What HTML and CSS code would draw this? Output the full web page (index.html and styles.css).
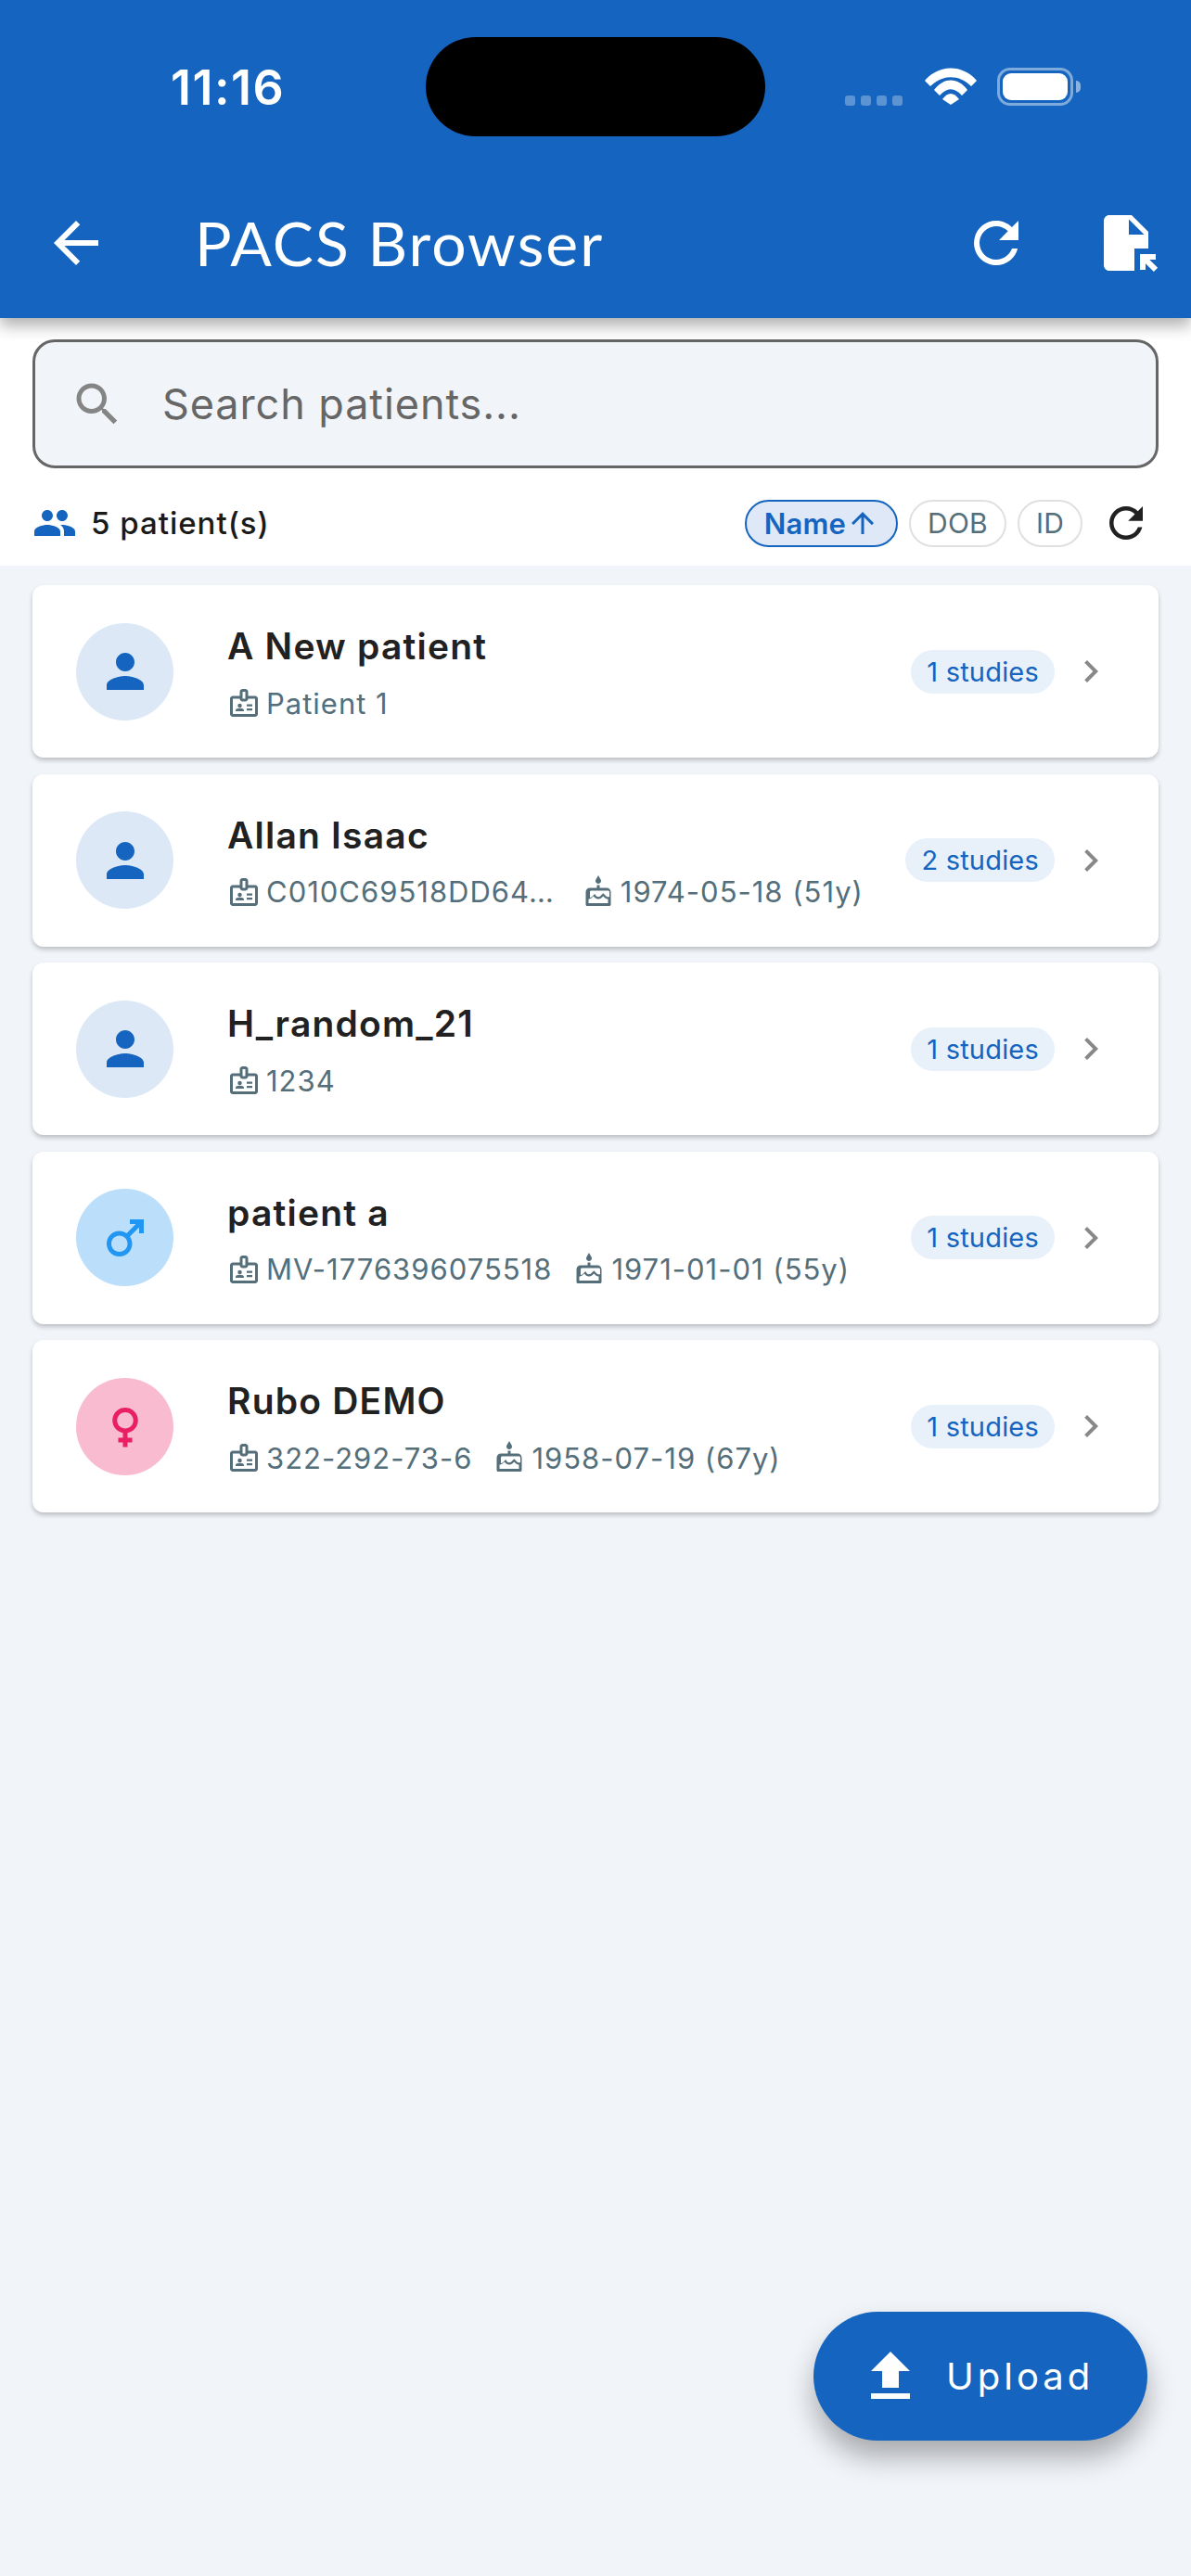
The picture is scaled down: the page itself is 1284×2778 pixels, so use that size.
FILE: index.html
```html
<!DOCTYPE html>
<html lang="en">
<head>
    <meta charset="UTF-8">
    <meta name="viewport" content="width=device-width, initial-scale=1.0">
    <title>PACS Browser</title>
    <link rel="stylesheet" href="styles.css">
</head>
<body>
    <svg class="sprite" xmlns="http://www.w3.org/2000/svg">
        <symbol id="i-back" viewBox="0 0 24 24"><path d="M20 11H7.83l5.59-5.59L12 4l-8 8 8 8 1.41-1.41L7.83 13H20v-2z"/></symbol>
        <symbol id="i-refresh" viewBox="0 0 24 24"><path d="M17.65 6.35C16.2 4.9 14.21 4 12 4c-4.42 0-7.99 3.58-7.99 8s3.57 8 7.99 8c3.73 0 6.84-2.55 7.73-6h-2.08c-.82 2.33-3.04 4-5.65 4-3.31 0-6-2.69-6-6s2.69-6 6-6c1.66 0 3.14.69 4.22 1.78L13 11h7V4l-2.35 2.35z"/></symbol>
        <symbol id="i-file-open" viewBox="0 0 24 24"><path d="M14 2H6c-1.1 0-1.99.9-1.99 2L4 20c0 1.1.89 2 1.99 2H15v-8h5V8l-6-6zm-1 7V3.5L18.5 9H13zm4 12.66V16h5.66v2h-2.24l2.95 2.95-1.41 1.41L19 19.41v2.24h-2z"/></symbol>
        <symbol id="i-search" viewBox="0 0 24 24"><path d="M15.5 14h-.79l-.28-.27C15.41 12.59 16 11.11 16 9.5 16 5.91 13.09 3 9.5 3S3 5.91 3 9.5 5.91 16 9.5 16c1.61 0 3.09-.59 4.23-1.57l.27.28v.79l5 4.99L20.49 19l-4.99-5zm-6 0C7.01 14 5 11.99 5 9.5S7.01 5 9.5 5 14 7.01 14 9.5 11.99 14 9.5 14z"/></symbol>
        <symbol id="i-people" viewBox="0 0 24 24"><path d="M16 11c1.66 0 2.99-1.34 2.99-3S17.66 5 16 5c-1.66 0-3 1.34-3 3s1.34 3 3 3zm-8 0c1.66 0 2.99-1.34 2.99-3S9.66 5 8 5C6.34 5 5 6.34 5 8s1.34 3 3 3zm0 2c-2.33 0-7 1.17-7 3.5V19h14v-2.5c0-2.33-4.67-3.5-7-3.5zm8 0c-.29 0-.62.02-.97.05 1.16.84 1.97 1.97 1.97 3.45V19h6v-2.5c0-2.33-4.67-3.5-7-3.5z"/></symbol>
        <symbol id="i-arrow-up" viewBox="0 0 24 24"><path d="M4 12l1.41 1.41L11 7.83V20h2V7.83l5.58 5.59L20 12l-8-8-8 8z"/></symbol>
        <symbol id="i-person" viewBox="0 0 24 24"><path d="M12 12c2.21 0 4-1.79 4-4s-1.79-4-4-4-4 1.79-4 4 1.79 4 4 4zm0 2c-2.67 0-8 1.34-8 4v2h16v-2c0-2.66-5.33-4-8-4z"/></symbol>
        <symbol id="i-male" viewBox="0 0 24 24"><path d="M9.5 11c1.93 0 3.5 1.57 3.5 3.5S11.43 18 9.5 18 6 16.43 6 14.5 7.57 11 9.5 11zm0-2C6.46 9 4 11.46 4 14.5S6.46 20 9.5 20s5.5-2.46 5.5-5.5c0-1.16-.36-2.23-.97-3.12L18 7.42V10h2V4h-6v2h2.58l-3.97 3.97C11.73 9.36 10.66 9 9.5 9z"/></symbol>
        <symbol id="i-female" viewBox="0 0 24 24"><path d="M17.5 9.5C17.5 6.46 15.04 4 12 4S6.5 6.46 6.5 9.5c0 2.7 1.94 4.93 4.5 5.4V17H9v2h2v2h2v-2h2v-2h-2v-2.1c2.56-.47 4.5-2.7 4.5-5.4zm-9 0C8.5 7.57 10.07 6 12 6s3.5 1.57 3.5 3.5S13.93 13 12 13s-3.5-1.57-3.5-3.5z"/></symbol>
        <symbol id="i-badge" viewBox="0 0 24 24"><path d="M20 7h-5V4c0-1.1-.9-2-2-2h-2C9.9 2 9 2.900 9 4v3H4C2.900 7 2 7.900 2 9v11c0 1.100.9 2 2 2h16c1.100 0 2-.9 2-2V9c0-1.100-.9-2-2-2zM11 4h2v5h-2V4zm9 16H4V9h5c0 1.100.9 2 2 2h2c1.100 0 2-.9 2-2h5v11z"/><circle cx="9" cy="14" r="1.5"/><path d="M11.080 16.180C10.440 15.900 9.740 15.750 9 15.750s-1.440.15-2.080.43C6.360 16.420 6 16.960 6 17.570V18h6v-.43c0-.61-.36-1.150-.92-1.390z"/><rect x="14" y="13" width="4" height="1.500"/><rect x="14" y="16" width="4" height="1.500"/></symbol>
        <symbol id="i-cake" viewBox="0 0 24 24"><path d="M12 6c1.110 0 2-.9 2-2 0-.38-.1-.73-.29-1.030L12 0l-1.710 2.970c-.19.3-.29.65-.29 1.030 0 1.100.9 2 2 2zm6 3h-5V7h-2v2H6c-1.660 0-3 1.340-3 3v9c0 .55.45 1 1 1h16c.55 0 1-.45 1-1v-9c0-1.660-1.340-3-3-3zm1 11H5v-3c.9-.01 1.760-.37 2.400-1.010l1.090-1.070 1.070 1.070c1.310 1.310 3.590 1.300 4.890 0l1.080-1.070 1.070 1.070c.64.64 1.500 1 2.400 1.010v3zm0-4.500c-.51-.01-.99-.2-1.350-.57l-2.130-2.130-2.140 2.130c-.74.74-2.030.74-2.770 0L9.480 13.370l-2.140 2.130c-.35.36-.83.56-1.340.57V12c0-.55.45-1 1-1h12c.55 0 1 .45 1 1v3.500z"/></symbol>
        <symbol id="i-chevron" viewBox="0 0 24 24"><path d="M10 6L8.590 7.410 13.170 12l-4.580 4.590L10 18l6-6z"/></symbol>
        <symbol id="i-upload" viewBox="0 0 24 24"><path d="M9 16h6v-6h4l-7-7-7 7h4zm-4 2h14v2H5z"/></symbol>
    </svg>

    <header class="appbar">
        <div class="status">
            <span class="time">11:16</span>
            <div class="notch"></div>
            <div class="indicators">
                <div class="signal"><i></i><i></i><i></i><i></i></div>
                <svg class="wifi" viewBox="0 0 56 40"><path d="M0 14C15-4 41-4 56 14L50 20C37 7 19 7 6 20Z"/><path d="M10 24C20 10 36 10 46 24L40 30C32 21 24 21 16 30Z"/><path d="M19 34C25 26 31 26 37 34L28 40Z"/></svg>
                <div class="battery"><div class="battery-fill"></div></div>
                <div class="battery-nub"></div>
            </div>
        </div>
        <div class="toolbar">
            <svg class="icon-72"><use href="#i-back"/></svg>
            <h1 class="title">PACS Browser</h1>
            <svg class="icon-72"><use href="#i-refresh"/></svg>
            <svg class="icon-72 file-open"><use href="#i-file-open"/></svg>
        </div>
    </header>

    <section class="panel">
        <div class="search">
            <svg class="search-icon"><use href="#i-search"/></svg>
            <span class="search-text">Search patients...</span>
        </div>
        <div class="sort-row">
            <svg class="people-icon"><use href="#i-people"/></svg>
            <span class="count">5 patient(s)</span>
            <span class="chip chip-active">Name<svg class="arrow"><use href="#i-arrow-up"/></svg></span>
            <span class="chip">DOB</span>
            <span class="chip">ID</span>
            <svg class="sort-refresh"><use href="#i-refresh"/></svg>
        </div>
    </section>

    <main class="list">
        <div class="card">
            <div class="avatar avatar-none"><svg><use href="#i-person"/></svg></div>
            <div class="info">
                <div class="name">A New patient</div>
                <div class="meta">
                    <svg><use href="#i-badge"/></svg><span class="meta-text">Patient 1</span>
                </div>
            </div>
            <span class="studies">1 studies</span>
            <svg class="chevron"><use href="#i-chevron"/></svg>
        </div>
        <div class="card">
            <div class="avatar avatar-none"><svg><use href="#i-person"/></svg></div>
            <div class="info">
                <div class="name">Allan Isaac</div>
                <div class="meta">
                    <svg><use href="#i-badge"/></svg><span class="meta-text meta-clipped">C010C69518DD64…</span>
                    <svg><use href="#i-cake"/></svg><span class="meta-text">1974-05-18 (51y)</span>
                </div>
            </div>
            <span class="studies">2 studies</span>
            <svg class="chevron"><use href="#i-chevron"/></svg>
        </div>
        <div class="card">
            <div class="avatar avatar-none"><svg><use href="#i-person"/></svg></div>
            <div class="info">
                <div class="name">H_random_21</div>
                <div class="meta">
                    <svg><use href="#i-badge"/></svg><span class="meta-text">1234</span>
                </div>
            </div>
            <span class="studies">1 studies</span>
            <svg class="chevron"><use href="#i-chevron"/></svg>
        </div>
        <div class="card">
            <div class="avatar avatar-male"><svg><use href="#i-male"/></svg></div>
            <div class="info">
                <div class="name">patient a</div>
                <div class="meta">
                    <svg><use href="#i-badge"/></svg><span class="meta-text">MV-1776396075518</span>
                    <svg><use href="#i-cake"/></svg><span class="meta-text">1971-01-01 (55y)</span>
                </div>
            </div>
            <span class="studies">1 studies</span>
            <svg class="chevron"><use href="#i-chevron"/></svg>
        </div>
        <div class="card">
            <div class="avatar avatar-female"><svg><use href="#i-female"/></svg></div>
            <div class="info">
                <div class="name">Rubo DEMO</div>
                <div class="meta">
                    <svg><use href="#i-badge"/></svg><span class="meta-text">322-292-73-6</span>
                    <svg><use href="#i-cake"/></svg><span class="meta-text">1958-07-19 (67y)</span>
                </div>
            </div>
            <span class="studies">1 studies</span>
            <svg class="chevron"><use href="#i-chevron"/></svg>
        </div>
    </main>

    <button class="fab" type="button">
        <svg><use href="#i-upload"/></svg>
        <span>Upload</span>
    </button>
</body>
</html>
```

FILE: styles.css
```css
* { margin: 0; padding: 0; box-sizing: border-box; }
html, body { width: 1284px; height: 2778px; overflow: hidden; }
body { position: relative; font-family: Inter, "Liberation Sans", sans-serif; background: #f1f4f9; color: #212121; }
.sprite { display: none; }
svg { fill: currentColor; flex-shrink: 0; }

/* app bar + status bar */
.appbar { position: relative; z-index: 2; height: 343px; background: #1565c0; color: white; box-shadow: 0 8px 16px rgba(0,0,0,0.32); }
.status { display: flex; height: 178px; padding: 40px 0 0 184px; }
.time { width: 275px; margin-top: 25px; font-size: 52px; line-height: 60px; font-weight: 600; letter-spacing: 1.5px; }
.notch { width: 366px; height: 107px; border-radius: 54px; background: black; }
.indicators { display: flex; align-items: flex-end; height: 41px; margin: 33px 0 0 86px; }
.signal { display: flex; gap: 6px; }
.signal i { width: 11px; height: 11px; border-radius: 3px; background: rgba(255,255,255,0.3); }
.wifi { width: 56px; height: 40px; margin: 0 22px 1px 24px; }
.battery { width: 82px; height: 41px; padding: 3px; border: 3px solid rgba(255,255,255,0.45); border-radius: 14px; }
.battery-fill { width: 100%; height: 100%; border-radius: 9px; background: white; }
.battery-nub { width: 5px; height: 13px; margin: 0 0 14px 3px; border-radius: 0 5px 5px 0; background: rgba(255,255,255,0.5); }
.toolbar { display: flex; align-items: center; height: 165px; padding: 3px 34px 0 46px; }
.icon-72 { width: 72px; height: 72px; }
.title { flex: 1; margin-left: 92px; font-family: Lato, sans-serif; font-size: 66px; line-height: 80px; font-weight: 400; letter-spacing: 2px; }
.file-open { margin-left: 68px; }

/* search + sort */
.panel { height: 267px; padding: 23px 35px 0; background: white; }
.search { display: flex; align-items: center; height: 139px; padding-left: 37px; background: #f1f4f9; border: 3px solid #666; border-radius: 24px; }
.search-icon { width: 60px; height: 60px; color: #858585; }
.search-text { margin-left: 40px; font-size: 45px; letter-spacing: 0.9px; color: #666; }
.sort-row { display: flex; align-items: center; height: 92px; margin-top: 13px; padding-right: 8px; }
.people-icon { width: 48px; height: 48px; color: #1565c0; }
.count { flex: 1; margin-left: 15px; font-size: 33px; font-weight: 500; letter-spacing: 1px; color: #1a1a1a; }
.chip { display: flex; align-items: center; height: 51px; margin-left: 12px; padding: 0 18px; font-size: 30px; letter-spacing: 0.2px; color: #546e7a; border: 2px solid #e0e0e0; border-radius: 26px; }
.chip-active { margin-left: 0; padding-left: 19px; background: #dee8f6; color: #1565c0; border-color: #1565c0; font-size: 31px; font-weight: 600; }
.arrow { width: 36px; height: 36px; }
.sort-refresh { width: 54px; height: 54px; margin-left: 20px; }

/* patient cards */
.list { display: flex; flex-direction: column; gap: 17.5px; padding: 21px 35px 0; }
.card { display: flex; align-items: center; height: 186px; padding: 0 49px 0 47px; background: white; border-radius: 12px; box-shadow: 0 3px 5px rgba(0,0,0,0.22); }
.avatar { display: flex; align-items: center; justify-content: center; width: 105px; height: 105px; border-radius: 50%; }
.avatar svg { width: 60px; height: 60px; }
.avatar-none { background: #dde8f6; color: #1565c0; }
.avatar-male { background: #bbdefb; color: #2196f3; }
.avatar-female { background: #f8bbd0; color: #e91e63; }
.info { flex: 1; margin-left: 58px; }
.name { font-size: 39px; line-height: 50px; font-weight: 600; letter-spacing: 1.2px; }
.meta { display: flex; align-items: center; margin-top: 18px; height: 36px; }
.meta svg { width: 36px; height: 36px; color: #546e7a; }
.meta-text { margin: 0 22px 0 6px; font-size: 31px; letter-spacing: 1px; color: #546e7a; }
.meta-clipped { margin-right: 29px; }
.studies { height: 47px; padding: 0 17px; font-size: 29px; line-height: 47px; letter-spacing: 0.2px; color: #1565c0; background: #e8f0fa; border-radius: 24px; }
.chevron { width: 48px; height: 48px; margin-left: 15px; color: #888; }

/* upload button */
.fab { position: absolute; left: 877px; top: 2493px; display: flex; align-items: center; width: 360px; height: 139px; padding-left: 47px; color: white; background: #1565c0; border: none; border-radius: 70px; box-shadow: 0 18px 30px rgba(0,0,0,0.3); font-family: inherit; }
.fab svg { width: 72px; height: 72px; }
.fab span { margin-left: 24px; font-size: 40px; font-weight: 400; letter-spacing: 4px; }
```
